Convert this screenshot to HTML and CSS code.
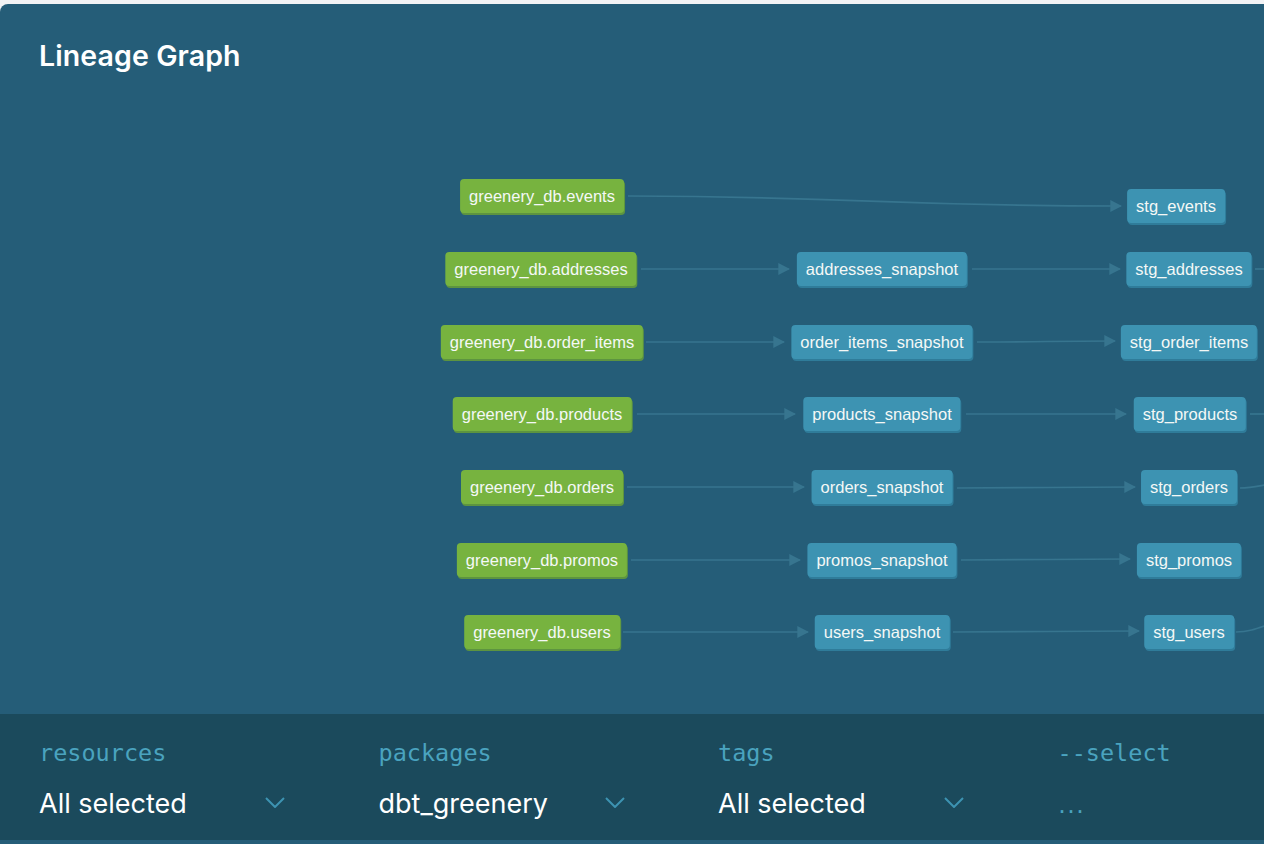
FILE: index.html
```html
<!DOCTYPE html>
<html lang="en">
<head>
<meta charset="utf-8">
<title>Lineage Graph</title>
<link rel="stylesheet" href="styles.css">
</head>
<body>
<section class="panel">
  <header class="panel-head">
    <h1 class="title">Lineage Graph</h1>
  </header>
  <div class="canvas">
    <svg class="edges" viewBox="0 90 1264 624" width="1264" height="624" xmlns="http://www.w3.org/2000/svg">
      <defs>
        <marker id="arrow" viewBox="0 0 10 10" refX="9" refY="5" markerWidth="7" markerHeight="7" orient="auto">
          <path d="M0,0 L10,5 L0,10 z" class="arrow-head"/>
        </marker>
      </defs>
      <g class="edge-lines">
        <path d="M628,196 C875,197 875,206 1121,206" marker-end="url(#arrow)"/>
        <path d="M641,269 L789,269" marker-end="url(#arrow)"/>
        <path d="M646,342 L784,342" marker-end="url(#arrow)"/>
        <path d="M637,414 L795,414" marker-end="url(#arrow)"/>
        <path d="M627,487 L804,487" marker-end="url(#arrow)"/>
        <path d="M631,560 L800,560" marker-end="url(#arrow)"/>
        <path d="M623,632 L808,632" marker-end="url(#arrow)"/>
        <path d="M972,269 L1120,269" marker-end="url(#arrow)"/>
        <path d="M977,342 C1045,342 1050,341 1115,341" marker-end="url(#arrow)"/>
        <path d="M966,414 L1126,414" marker-end="url(#arrow)"/>
        <path d="M957,488 C1045,488 1050,487 1135,487" marker-end="url(#arrow)"/>
        <path d="M961,560 C1045,560 1050,559 1130,559" marker-end="url(#arrow)"/>
        <path d="M953,632 C1045,632 1050,631 1139,631" marker-end="url(#arrow)"/>
        <path d="M1255,269 L1270,269"/>
        <path d="M1250,414 L1270,414"/>
        <path d="M1240,488 C1252,488 1258,486 1270,484"/>
        <path d="M1236,632 C1248,632 1256,629 1270,624"/>
      </g>
    </svg>

    <div class="node source" style="left:542px; top:106px">greenery_db.events</div>
    <div class="node source" style="left:541px; top:179px">greenery_db.addresses</div>
    <div class="node source" style="left:542px; top:252px">greenery_db.order_items</div>
    <div class="node source" style="left:542px; top:324px">greenery_db.products</div>
    <div class="node source" style="left:542px; top:397px">greenery_db.orders</div>
    <div class="node source" style="left:542px; top:470px">greenery_db.promos</div>
    <div class="node source" style="left:542px; top:542px">greenery_db.users</div>

    <div class="node model" style="left:882px; top:179px">addresses_snapshot</div>
    <div class="node model" style="left:882px; top:252px">order_items_snapshot</div>
    <div class="node model" style="left:882px; top:324px">products_snapshot</div>
    <div class="node model" style="left:882px; top:397px">orders_snapshot</div>
    <div class="node model" style="left:882px; top:470px">promos_snapshot</div>
    <div class="node model" style="left:882px; top:542px">users_snapshot</div>

    <div class="node model" style="left:1176px; top:116px">stg_events</div>
    <div class="node model" style="left:1189px; top:179px">stg_addresses</div>
    <div class="node model" style="left:1189px; top:252px">stg_order_items</div>
    <div class="node model" style="left:1190px; top:324px">stg_products</div>
    <div class="node model" style="left:1189px; top:397px">stg_orders</div>
    <div class="node model" style="left:1189px; top:470px">stg_promos</div>
    <div class="node model" style="left:1189px; top:542px">stg_users</div>
  </div>

  <footer class="filters">
    <div class="filter">
      <div class="filter-label">resources</div>
      <div class="filter-value">
        <span>All selected</span>
        <svg class="chevron" viewBox="0 0 20 11" width="20" height="11"><path d="M1,1 L10,10 L19,1"/></svg>
      </div>
    </div>
    <div class="filter">
      <div class="filter-label">packages</div>
      <div class="filter-value">
        <span>dbt_greenery</span>
        <svg class="chevron" viewBox="0 0 20 11" width="20" height="11"><path d="M1,1 L10,10 L19,1"/></svg>
      </div>
    </div>
    <div class="filter">
      <div class="filter-label">tags</div>
      <div class="filter-value">
        <span>All selected</span>
        <svg class="chevron" viewBox="0 0 20 11" width="20" height="11"><path d="M1,1 L10,10 L19,1"/></svg>
      </div>
    </div>
    <div class="filter">
      <div class="filter-label">--select</div>
      <div class="filter-value">
        <span class="placeholder">...</span>
      </div>
    </div>
  </footer>
</section>
</body>
</html>
```

FILE: styles.css
```css
* {
  box-sizing: border-box;
}

html, body {
  margin: 0;
  padding: 0;
}

body {
  background: #f2f3f5;
  width: 1264px;
  height: 844px;
  overflow: hidden;
  font-family: Inter, "Noto Sans", sans-serif;
}

.panel {
  margin-top: 4px;
  height: 840px;
  background: #255d78;
  border-top-left-radius: 8px;
  display: flex;
  flex-direction: column;
  padding-bottom: 4px;
}

.panel-head {
  padding: 36px 0 18px 39px;
  height: 86px;
}

.title {
  margin: 0;
  font-family: Inter, sans-serif;
  font-weight: 600;
  font-size: 28.5px;
  line-height: 32px;
  color: #ffffff;
  letter-spacing: 0.1px;
}

.canvas {
  position: relative;
  flex: 1;
  overflow: hidden;
}

.edges {
  position: absolute;
  left: 0;
  top: 0;
}

.edge-lines path {
  fill: none;
  stroke: #37758f;
  stroke-width: 1.7;
}

.arrow-head {
  fill: #37758f;
}

.node {
  position: absolute;
  transform: translate(-50%, -50%);
  height: 34px;
  padding: 0 9px;
  display: flex;
  align-items: center;
  white-space: nowrap;
  font-family: "Liberation Sans", Arial, sans-serif;
  font-size: 16.5px;
  color: #f4f8f6;
  border-radius: 4px;
}

.source {
  background: #77b33f;
  box-shadow: 1px 2px 0 #5d9440;
}

.model {
  background: #3d93b2;
  box-shadow: 1px 2px 0 #2f7c9a;
}

.filters {
  height: 126px;
  background: #1b4a5c;
  display: grid;
  grid-template-columns: repeat(4, 247px);
  column-gap: 92.5px;
  padding: 25px 0 20px 39px;
}

.filter {
  display: flex;
  flex-direction: column;
  gap: 21px;
}

.filter-label {
  font-family: "DejaVu Sans Mono", monospace;
  font-size: 23.5px;
  line-height: 28px;
  color: #4aa3bf;
}

.filter-value {
  height: 32px;
  display: flex;
  align-items: center;
  justify-content: space-between;
  font-family: Inter, sans-serif;
  font-size: 27px;
  line-height: 32px;
  color: #ffffff;
}

.chevron {
  margin-right: 1px;
  margin-top: -4px;
}

.chevron path {
  fill: none;
  stroke: #3d93b2;
  stroke-width: 2;
}

.placeholder {
  font-family: "DejaVu Sans Mono", monospace;
  font-size: 15px;
  font-weight: bold;
  color: #4aa3bf;
  margin-top: 8px;
}
```
